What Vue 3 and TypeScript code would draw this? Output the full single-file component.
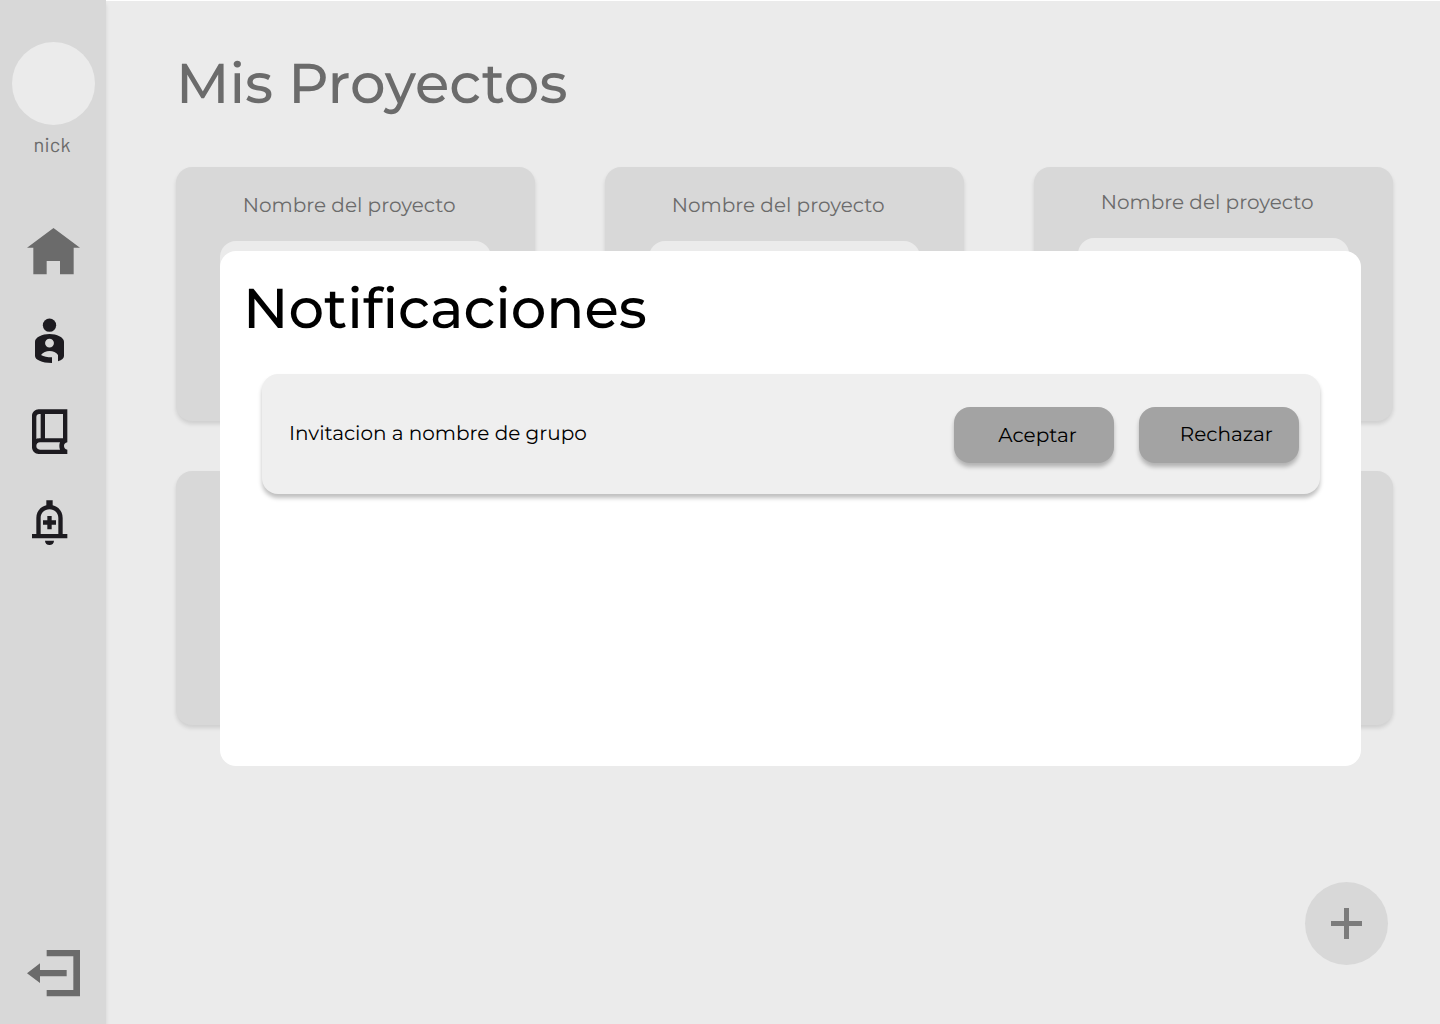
<script setup lang="ts">
interface Project {
  id: number
  name: string
  raised?: boolean
}

const projects: Project[] = [
  { id: 1, name: 'Nombre del proyecto' },
  { id: 2, name: 'Nombre del proyecto' },
  { id: 3, name: 'Nombre del proyecto', raised: true },
  { id: 4, name: '' },
  { id: 5, name: '' },
  { id: 6, name: '' },
]
</script>

<template>
  <div class="app">
    <aside class="sidebar">
      <div class="avatar"></div>
      <div class="nick">nick</div>
      <nav class="nav">
        <svg class="home" width="53" height="47" viewBox="51 54 159 141">
          <path fill="#6b6b6b" d="M130.500 54L210 113H191V193H150V153H110V193H70V113H51Z" />
        </svg>
        <svg class="person" width="30" height="47" viewBox="75 323 90 141">
          <g fill="#1d1b20">
            <circle cx="118.500" cy="344.500" r="20" />
            <path
              fill-rule="evenodd"
              d="M75 394C75 381 97 371 118.500 371C140 371 162 381 162 394V437C162 443 156 449 144 453V434C139 426 129 422 118.500 422C109 422 99 426 93 434C101 439 112 441 126 441V458C95 458 75 448 75 437ZM118.500 385A13.300 13.300 0 1 0 118.500 411.600A13.300 13.300 0 1 0 118.500 385Z"
            />
          </g>
        </svg>
        <svg class="book" width="36" height="46" viewBox="66 56 108 138">
          <path
            fill="#1d1b20"
            fill-rule="evenodd"
            d="M86 57H172V156C166 157 162 161 162 167C162 173 166 177 172 178V191H86C75 191 66 182 66 171V77C66 66 75 57 86 57ZM92 71H88C83 71 79 75 79 80V146C82 144.500 85 144 92 144ZM105 71V144H159V71ZM90 156C83 156 79 161 79 167C79 173 83 178 90 178H150C148.500 174 148 171 148 167C148 163 148.500 160 150 156Z"
          />
        </svg>
        <svg class="bell" width="36" height="46" viewBox="66 329 108 138">
          <path
            fill="#1d1b20"
            fill-rule="evenodd"
            d="M109 330H128V345C146 349 158 364 158 383V431H172V444H66V431H79V383C79 364 91 349 109 345ZM92 431H145V383C145 368 134 357 118.500 357C103 357 92 368 92 383ZM112 377H125V390H138V403H125V417H112V403H99V390H112ZM105 451H132C132 459 126 464 118.500 464C111 464 105 459 105 451Z"
          />
        </svg>
      </nav>
      <svg class="logout" width="53" height="47" viewBox="51 60 159 141">
        <path fill="#6b6b6b" d="M110 60H210V199H110V180H190V79H110ZM51 130L90 100V120H170V139H90V159Z" />
      </svg>
    </aside>

    <main class="main">
      <h1 class="title">Mis Proyectos</h1>
      <section class="grid">
        <article v-for="p in projects" :key="p.id" class="card" :class="{ raised: p.raised }">
          <div class="name">{{ p.name }}</div>
          <div v-if="p.name" class="preview"></div>
        </article>
      </section>
    </main>

    <button class="fab" aria-label="Nuevo proyecto">
      <svg width="31" height="31" viewBox="0 0 31 31">
        <path fill="#7c7c7c" d="M13 0H18V13H31V18H18V31H13V18H0V13H13Z" />
      </svg>
    </button>

    <div class="modal" role="dialog">
      <h2 class="heading">Notificaciones</h2>
      <div class="item">
        <span class="message">Invitacion a nombre de grupo</span>
        <button class="action accept">Aceptar</button>
        <button class="action reject">Rechazar</button>
      </div>
    </div>
  </div>
</template>

<style>
body {
  margin: 0;
  background: #fff;
}
</style>

<style scoped>
.app {
  position: relative;
  display: flex;
  width: 1440px;
  height: 1024px;
  overflow: hidden;
  font-family: Montserrat, Inter, sans-serif;
  text-rendering: geometricPrecision;
  color: #6b6b6b;
}
.app svg {
  display: block;
}
.sidebar {
  z-index: 1;
  display: flex;
  flex-direction: column;
  box-sizing: border-box;
  flex: 0 0 106px;
  padding: 42px 0 27px;
  background: #d8d8d8;
  box-shadow: 0 4px 4px rgba(0, 0, 0, 0.1);
}
.avatar {
  width: 83px;
  height: 83px;
  margin-left: 12px;
  border-radius: 50%;
  background: #ebebeb;
}
.nick {
  margin: 7px 0 0 33.600px;
  font: 400 20px/24px Barlow, Roboto, sans-serif;
  letter-spacing: 0.2px;
}
.nav {
  display: flex;
  flex-direction: column;
  margin-top: 72px;
}
.home {
  margin-left: 27px;
}
.person {
  margin: 43px 0 0 35px;
}
.book {
  margin: 44px 0 0 32px;
}
.bell {
  margin: 45px 0 0 32px;
}
.logout {
  margin: auto 0 0 27px;
}
.main {
  flex: 1;
  box-sizing: border-box;
  margin-top: 1px;
  padding: 53px 47px 0 70px;
  background: #ebebeb;
}
.title,
.heading {
  margin: 0;
  font-size: 56px;
  line-height: 60px;
  font-weight: 500;
  white-space: nowrap;
}
.grid {
  display: grid;
  grid-template-columns: repeat(3, 359px);
  grid-auto-rows: 254px;
  gap: 50px 70px;
  margin-top: 53px;
}
.card {
  box-sizing: border-box;
  padding: 27px 44px 0;
  border-radius: 16px;
  background: #d8d8d8;
  box-shadow: 0 3px 4px rgba(0, 0, 0, 0.12);
}
.card.raised {
  padding-top: 24px;
}
.name {
  height: 24px;
  padding-left: 22.700px;
  font-size: 20px;
  line-height: 24px;
  white-space: nowrap;
}
.preview {
  height: 150px;
  margin-top: 23px;
  border-radius: 16px;
  background: #ebebeb;
}
button {
  border: 0;
  padding: 0;
  font: inherit;
  text-rendering: inherit;
  color: inherit;
}
.fab {
  position: absolute;
  left: 1305px;
  top: 882px;
  display: grid;
  place-items: center;
  width: 83px;
  height: 83px;
  border-radius: 50%;
  background: #d8d8d8;
}
.modal {
  position: absolute;
  z-index: 2;
  left: 220px;
  top: 251px;
  box-sizing: border-box;
  width: 1141px;
  height: 515px;
  padding: 28px 41px 0 42px;
  border-radius: 16px;
  background: #fff;
  color: #000;
}
.heading {
  margin-left: -19px;
}
.item {
  display: flex;
  align-items: center;
  box-sizing: border-box;
  height: 120px;
  margin-top: 35px;
  padding: 0 21px 0 27px;
  border-radius: 16px;
  background: #efefef;
  box-shadow: 0 4px 4px rgba(0, 0, 0, 0.25);
}
.message {
  flex: 1;
  padding-bottom: 1px;
  font-size: 20px;
  line-height: 24px;
  white-space: nowrap;
}
.action {
  box-sizing: border-box;
  width: 160px;
  height: 56px;
  border-radius: 16px;
  background: #a3a3a3;
  box-shadow: 0 4px 4px rgba(0, 0, 0, 0.25);
  font-size: 20px;
  line-height: 24px;
  text-align: left;
}
.item .action {
  margin-top: 2px;
}
.accept {
  padding: 2px 0 0 44.300px;
}
.reject {
  margin-left: 25px;
  padding: 0 0 0 40.800px;
}
</style>
